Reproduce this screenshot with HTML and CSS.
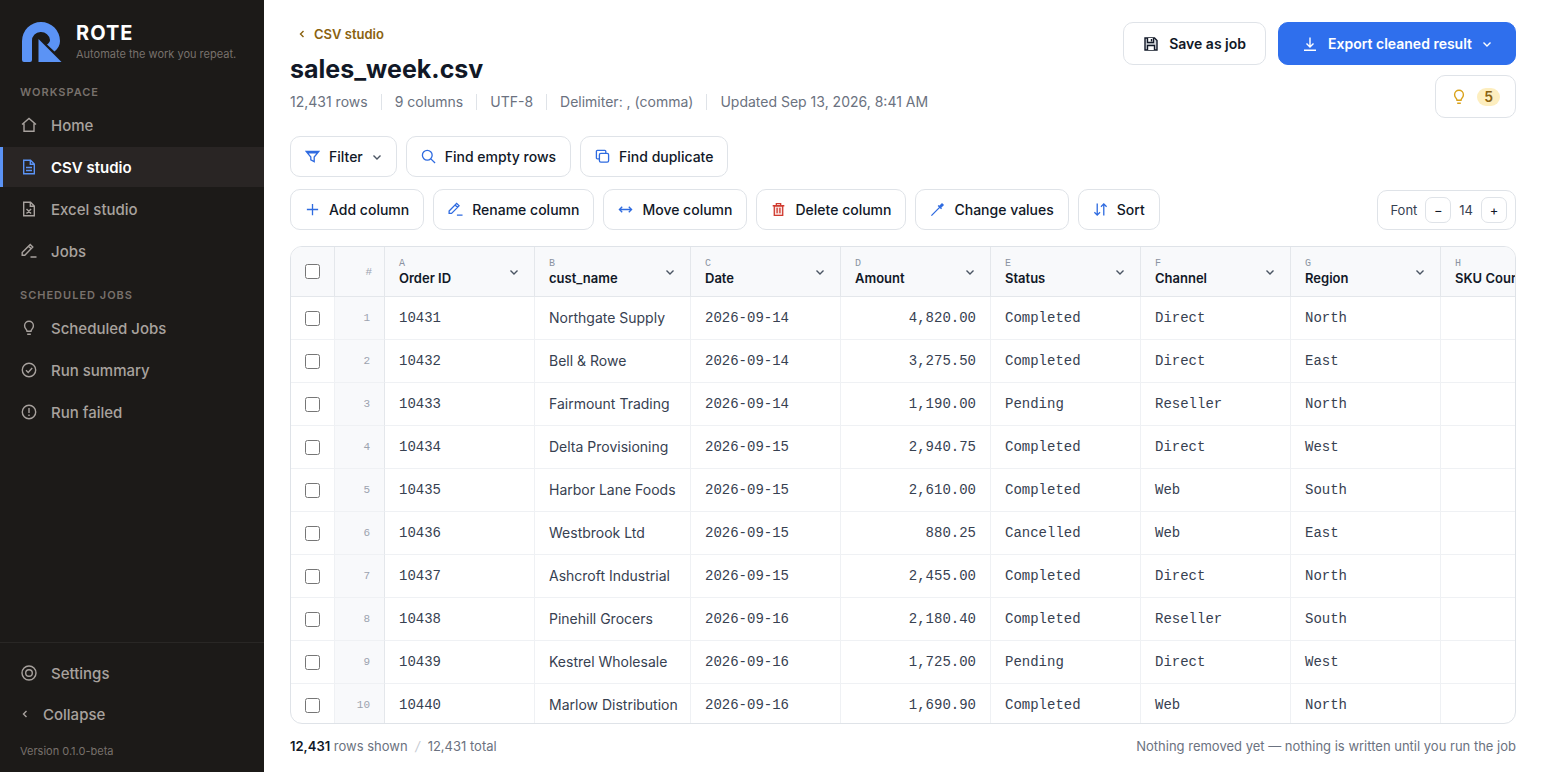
FILE: index.html
```html
<!DOCTYPE html>
<html lang="en">
<head>
    <meta charset="utf-8">
    <meta name="viewport" content="width=device-width">
    <title>ROTE</title>
    <link rel="stylesheet" href="styles.css">
</head>

<body>
    <svg class="sprite" aria-hidden="true">
        <symbol id="i-home" viewBox="0 0 16 16"><path d="M1 7.5 8 1.5l7 6M3 6.5V14.3h10V6.5"/></symbol>
        <symbol id="i-file" viewBox="0 0 16 16"><path d="M2.7 1.2h6.8l3.8 3.8v9.8H2.7zM9.3 1.5v3.7h3.7M5 8.5h6M5 11.5h6"/></symbol>
        <symbol id="i-excel" viewBox="0 0 16 16"><path d="M2.7 1.2h6.8l3.8 3.8v9.8H2.7zM9.3 1.5v3.7h3.7M5.5 8l4.6 4.6M10.1 8l-4.6 4.6"/></symbol>
        <symbol id="i-edit" viewBox="0 0 16 16"><path d="M1.2 9.600 9.200 1.500l2.600 2.600-8 8.100H1.200zM7.600 3.200l2.600 2.600M9.500 14h6"/></symbol>
        <symbol id="i-bulb" viewBox="0 0 16 16"><path d="M6 11.3c0-2-2.4-2.5-2.4-5.6a4.4 4.4 0 0 1 8.8 0c0 3.1-2.4 3.6-2.4 5.6zM6.2 14.2h3.6"/></symbol>
        <symbol id="i-check" viewBox="0 0 16 16"><circle cx="8" cy="8" r="6.7"/><path d="m5 8.2 2.2 2.200L11.200 6"/></symbol>
        <symbol id="i-alert" viewBox="0 0 16 16"><circle cx="8" cy="8" r="6.7"/><path d="M8 4v5M8 10.500v1.500"/></symbol>
        <symbol id="i-settings" viewBox="0 0 16 16"><circle cx="8" cy="8" r="7"/><circle cx="8" cy="8" r="3.3"/></symbol>
        <symbol id="i-left" viewBox="0 0 8 8"><path d="M5.5 1 2.5 4l3 3"/></symbol>
        <symbol id="i-down" viewBox="0 0 10 10"><path d="m1.5 3.500 3.500 3.500 3.500-3.500"/></symbol>
        <symbol id="i-save" viewBox="0 0 16 16"><path fill="#d5d8dd" d="M2 2h9.500L14 4.500V14H2z"/><path fill="#fff" d="M4.500 2v4.500h6V2M4.500 14V9.500h7V14"/><path d="M8.500 3v2.500"/></symbol>
        <symbol id="i-export" viewBox="0 0 16 16"><path d="M8 1.500v9M4.500 7.500 8 11l3.500-3.500M2 14.200h12"/></symbol>
        <symbol id="i-filter" viewBox="0 0 16 16"><path d="M1.200 2.500h13.600L9.800 8.500v5L6.200 11.500v-3zM2.500 4h11"/></symbol>
        <symbol id="i-search" viewBox="0 0 16 16"><circle cx="6.700" cy="6.700" r="5.200"/><path d="m10.500 10.500 4.500 4.500"/></symbol>
        <symbol id="i-copy" viewBox="0 0 16 16"><rect x="4.700" y="4.700" width="9.800" height="9.300" rx="1.500"/><path d="M4.500 10.500H2.500a1 1 0 0 1-1-1V2.500a1 1 0 0 1 1-1h8a1 1 0 0 1 1 1v2"/></symbol>
        <symbol id="i-plus" viewBox="0 0 16 16"><path d="M8 2v12M2 8h12"/></symbol>
        <symbol id="i-move" viewBox="0 0 16 16"><path d="M1.500 8h13M4.500 5l-3 3 3 3M11.500 5l3 3-3 3"/></symbol>
        <symbol id="i-trash" viewBox="0 0 16 16"><path fill="#fbe3e0" d="M3.500 4h9v10.200h-9z"/><path d="M1.800 4h12.400M5.700 4V1.800h4.600V4M6.500 6v6M9.500 6v6"/></symbol>
        <symbol id="i-wand" viewBox="0 0 16 16"><path d="M1.500 14.500 10.500 5.500M8.700 3.700l3.600 3.600"/><path fill="currentColor" d="m10.300 4.500 1.200 1.200L14 3.200 12.800 2z"/></symbol>
        <symbol id="i-sort" viewBox="0 0 16 16"><path d="M4.500 1.500v12.500M1.500 11l3 3 3-3M11.500 14.500V2M8.500 5l3-3 3 3"/></symbol>
    </svg>

    <div class="app">
        <aside class="sidebar">
            <div class="brand">
                <svg class="logo" viewBox="0 0 40 40" aria-hidden="true">
                    <path d="M0 38V19A19 19 0 0 1 38 19C38 23 36 27 32.500 29.500L25 22.500C27 21 28 19.500 28 18A9 8.500 0 0 0 10 19V38Q10 40 8 40H2Q0 40 0 38z"/>
                    <path d="M16.500 17 39.500 40H16.500z"/>
                </svg>
                <div>
                    <div class="brand-name">ROTE</div>
                    <div class="brand-tag">Automate the work you repeat.</div>
                </div>
            </div>

            <nav class="nav">
                <h2>WORKSPACE</h2>
                <a href="#"><svg class="icon"><use href="#i-home"/></svg>Home</a>
                <a href="#" class="active" aria-current="page"><svg class="icon"><use href="#i-file"/></svg>CSV studio</a>
                <a href="#"><svg class="icon"><use href="#i-excel"/></svg>Excel studio</a>
                <a href="#"><svg class="icon"><use href="#i-edit"/></svg>Jobs</a>
                <h2>SCHEDULED JOBS</h2>
                <a href="#"><svg class="icon"><use href="#i-bulb"/></svg>Scheduled Jobs</a>
                <a href="#"><svg class="icon"><use href="#i-check"/></svg>Run summary</a>
                <a href="#"><svg class="icon"><use href="#i-alert"/></svg>Run failed</a>
            </nav>

            <div class="nav nav-bottom">
                <a href="#"><svg class="icon"><use href="#i-settings"/></svg>Settings</a>
                <button type="button" class="collapse"><svg class="icon small"><use href="#i-left"/></svg>Collapse</button>
                <p class="version">Version 0.1.0-beta</p>
            </div>
        </aside>

        <main class="main">
            <header class="header">
                <div>
                    <a href="#" class="back"><svg class="icon small"><use href="#i-left"/></svg>CSV studio</a>
                    <h1>sales_week.csv</h1>
                    <ul class="meta">
                        <li>12,431 rows</li>
                        <li>9 columns</li>
                        <li>UTF-8</li>
                        <li>Delimiter: , (comma)</li>
                        <li>Updated Sep 13, 2026, 8:41 AM</li>
                    </ul>
                </div>
                <div class="actions">
                    <button type="button" class="btn btn-lg"><svg class="icon"><use href="#i-save"/></svg>Save as job</button>
                    <button type="button" class="btn btn-lg primary"><svg class="icon"><use href="#i-export"/></svg>Export cleaned result<svg class="icon caret"><use href="#i-down"/></svg></button>
                    <button type="button" class="btn btn-lg hints" aria-label="Suggestions"><svg class="icon"><use href="#i-bulb"/></svg><span class="badge">5</span></button>
                </div>
            </header>

            <div class="toolbar">
                <button type="button" class="btn"><svg class="icon"><use href="#i-filter"/></svg>Filter<svg class="icon caret"><use href="#i-down"/></svg></button>
                <button type="button" class="btn"><svg class="icon"><use href="#i-search"/></svg>Find empty rows</button>
                <button type="button" class="btn"><svg class="icon"><use href="#i-copy"/></svg>Find duplicate</button>
            </div>
            <div class="toolbar">
                <button type="button" class="btn"><svg class="icon"><use href="#i-plus"/></svg>Add column</button>
                <button type="button" class="btn"><svg class="icon"><use href="#i-edit"/></svg>Rename column</button>
                <button type="button" class="btn"><svg class="icon"><use href="#i-move"/></svg>Move column</button>
                <button type="button" class="btn danger"><svg class="icon"><use href="#i-trash"/></svg>Delete column</button>
                <button type="button" class="btn"><svg class="icon"><use href="#i-wand"/></svg>Change values</button>
                <button type="button" class="btn"><svg class="icon"><use href="#i-sort"/></svg>Sort</button>
                <div class="font-size" role="group" aria-label="Font size">
                    <span>Font</span>
                    <button type="button" aria-label="Smaller">−</button>
                    <output>14</output>
                    <button type="button" aria-label="Larger">+</button>
                </div>
            </div>

            <div class="grid">
                <table>
                    <colgroup>
                        <col class="c-check"><col class="c-num"><col><col class="c-name"><col><col><col><col><col><col>
                    </colgroup>
                    <thead>
                        <tr>
                            <th class="check"><input type="checkbox" aria-label="Select all rows"></th>
                            <th class="num">#</th>
                            <th><div class="head"><span><small>A</small>Order ID</span><svg class="icon caret"><use href="#i-down"/></svg></div></th>
                            <th><div class="head"><span><small>B</small>cust_name</span><svg class="icon caret"><use href="#i-down"/></svg></div></th>
                            <th><div class="head"><span><small>C</small>Date</span><svg class="icon caret"><use href="#i-down"/></svg></div></th>
                            <th><div class="head"><span><small>D</small>Amount</span><svg class="icon caret"><use href="#i-down"/></svg></div></th>
                            <th><div class="head"><span><small>E</small>Status</span><svg class="icon caret"><use href="#i-down"/></svg></div></th>
                            <th><div class="head"><span><small>F</small>Channel</span><svg class="icon caret"><use href="#i-down"/></svg></div></th>
                            <th><div class="head"><span><small>G</small>Region</span><svg class="icon caret"><use href="#i-down"/></svg></div></th>
                            <th><div class="head"><span><small>H</small>SKU Count</span></div></th>
                        </tr>
                    </thead>
                    <tbody>
                        <tr><td class="check"><input type="checkbox" aria-label="Row 1"></td><td class="num">1</td><td>10431</td><td class="name">Northgate Supply</td><td>2026-09-14</td><td class="amount">4,820.00</td><td>Completed</td><td>Direct</td><td>North</td><td></td></tr>
                        <tr><td class="check"><input type="checkbox" aria-label="Row 2"></td><td class="num">2</td><td>10432</td><td class="name">Bell &amp; Rowe</td><td>2026-09-14</td><td class="amount">3,275.50</td><td>Completed</td><td>Direct</td><td>East</td><td></td></tr>
                        <tr><td class="check"><input type="checkbox" aria-label="Row 3"></td><td class="num">3</td><td>10433</td><td class="name">Fairmount Trading</td><td>2026-09-14</td><td class="amount">1,190.00</td><td>Pending</td><td>Reseller</td><td>North</td><td></td></tr>
                        <tr><td class="check"><input type="checkbox" aria-label="Row 4"></td><td class="num">4</td><td>10434</td><td class="name">Delta Provisioning</td><td>2026-09-15</td><td class="amount">2,940.75</td><td>Completed</td><td>Direct</td><td>West</td><td></td></tr>
                        <tr><td class="check"><input type="checkbox" aria-label="Row 5"></td><td class="num">5</td><td>10435</td><td class="name">Harbor Lane Foods</td><td>2026-09-15</td><td class="amount">2,610.00</td><td>Completed</td><td>Web</td><td>South</td><td></td></tr>
                        <tr><td class="check"><input type="checkbox" aria-label="Row 6"></td><td class="num">6</td><td>10436</td><td class="name">Westbrook Ltd</td><td>2026-09-15</td><td class="amount">880.25</td><td>Cancelled</td><td>Web</td><td>East</td><td></td></tr>
                        <tr><td class="check"><input type="checkbox" aria-label="Row 7"></td><td class="num">7</td><td>10437</td><td class="name">Ashcroft Industrial</td><td>2026-09-15</td><td class="amount">2,455.00</td><td>Completed</td><td>Direct</td><td>North</td><td></td></tr>
                        <tr><td class="check"><input type="checkbox" aria-label="Row 8"></td><td class="num">8</td><td>10438</td><td class="name">Pinehill Grocers</td><td>2026-09-16</td><td class="amount">2,180.40</td><td>Completed</td><td>Reseller</td><td>South</td><td></td></tr>
                        <tr><td class="check"><input type="checkbox" aria-label="Row 9"></td><td class="num">9</td><td>10439</td><td class="name">Kestrel Wholesale</td><td>2026-09-16</td><td class="amount">1,725.00</td><td>Pending</td><td>Direct</td><td>West</td><td></td></tr>
                        <tr><td class="check"><input type="checkbox" aria-label="Row 10"></td><td class="num">10</td><td>10440</td><td class="name">Marlow Distribution</td><td>2026-09-16</td><td class="amount">1,690.90</td><td>Completed</td><td>Web</td><td>North</td><td></td></tr>
                    </tbody>
                </table>
            </div>

            <footer class="footer">
                <p><b>12,431</b> rows shown <i>/</i> 12,431 total</p>
                <p>Nothing removed yet — nothing is written until you run the job</p>
            </footer>
        </main>
    </div>
</body>
</html>
```
FILE: styles.css
```css
* {
    box-sizing: border-box;
}
body {
    margin: 0;
    font-family: Inter, "Liberation Sans", sans-serif;
    font-size: 14px;
    color: #111827;
    background-color: #fff;
}
h1, h2, p, ul {
    margin: 0;
    padding: 0;
}
a {
    color: inherit;
    text-decoration: none;
}
button {
    font: inherit;
    color: inherit;
    cursor: pointer;
}
.sprite {
    display: none;
}
.icon {
    width: 16px;
    height: 16px;
    flex: none;
    fill: none;
    stroke: currentColor;
    stroke-width: 1.4;
}
.icon.small {
    width: 8px;
    height: 8px;
}
.icon.caret {
    width: 10px;
    height: 10px;
    color: #4b5563;
}
.app {
    display: flex;
    height: 100vh;
}

/* sidebar */
.sidebar {
    display: flex;
    flex-direction: column;
    width: 264px;
    flex: none;
    color: #a8a29e;
    background-color: #1c1a18;
}
.brand {
    display: flex;
    gap: 14px;
    padding: 22px 22px 0;
}
.logo {
    width: 40px;
    height: 40px;
    fill: #5b93f5;
}
.brand-name {
    font-size: 20px;
    font-weight: 700;
    line-height: 22px;
    letter-spacing: 1px;
    color: #fff;
}
.brand-tag {
    font-size: 11px;
    line-height: 20px;
    white-space: nowrap;
    color: #78716c;
}
.nav {
    display: flex;
    flex-direction: column;
    gap: 2px;
}
.nav h2 {
    padding: 13px 20px 2px;
    font-size: 11px;
    font-weight: 600;
    line-height: 18px;
    letter-spacing: 1px;
    color: #78716c;
}
.nav h2:first-child {
    padding-top: 19px;
}
.nav a, .collapse {
    display: flex;
    align-items: center;
    gap: 14px;
    height: 40px;
    padding: 0 18px;
    border: 0;
    border-left: 3px solid transparent;
    font-size: 15px;
    font-weight: 500;
    background: none;
}
.nav a.active {
    border-left-color: #5b93f5;
    font-weight: 600;
    color: #fff;
    background-color: #292524;
}
.nav a.active .icon {
    color: #5b93f5;
}
.nav-bottom {
    gap: 1px;
    margin-top: auto;
    padding: 10px 0 12px;
    border-top: 1px solid #292725;
}
.version {
    padding: 7px 20px 0;
    font-size: 11px;
    line-height: 18px;
    color: #78716c;
}

/* page header */
.main {
    display: flex;
    flex-direction: column;
    flex: 1;
    min-width: 0;
    padding: 22px 26px 16px;
}
.header {
    display: flex;
    justify-content: space-between;
    margin-bottom: 18px;
}
.back {
    display: inline-flex;
    align-items: center;
    gap: 8px;
    padding: 0 8px;
    font-size: 13px;
    font-weight: 600;
    line-height: 24px;
    color: #8a6210;
}
h1 {
    font-size: 25px;
    font-weight: 700;
    line-height: 46px;
}
.meta {
    display: flex;
    list-style: none;
    line-height: 20px;
    color: #6b7280;
}
.meta li {
    display: flex;
    align-items: center;
}
.meta li + li::before {
    content: "";
    height: 16px;
    margin: 0 13px;
    border-left: 1px solid #dfe3e8;
}
.actions {
    display: flex;
    flex-wrap: wrap;
    justify-content: flex-end;
    gap: 10px 12px;
    width: 400px;
}
.btn {
    display: flex;
    align-items: center;
    gap: 9px;
    height: 41px;
    padding: 0 14px;
    border: 1px solid #dfe3e8;
    border-radius: 10px;
    font-weight: 500;
    white-space: nowrap;
    background-color: #fff;
}
.btn-lg {
    gap: 10px;
    height: 43px;
    padding: 0 19px;
    font-weight: 600;
}
.btn.primary {
    padding: 0 23px;
    border-color: #2f6fed;
    color: #fff;
    background-color: #2f6fed;
}
.btn.primary .caret {
    color: #fff;
}
.hints .icon {
    color: #d9a21b;
}
.hints {
    padding: 0 15px;
}
.badge {
    padding: 0 7px;
    border-radius: 9px;
    line-height: 18px;
    color: #8a6210;
    background-color: #fdeebf;
}

/* toolbars */
.toolbar {
    display: flex;
    gap: 9px;
    margin-bottom: 12px;
}
.toolbar .icon {
    width: 15px;
    height: 15px;
    color: #2f6be0;
}
.toolbar .caret {
    width: 10px;
    height: 10px;
    color: #4b5563;
}
.toolbar .danger .icon {
    color: #d03a2f;
}
.font-size {
    display: flex;
    align-items: center;
    align-self: flex-end;
    gap: 8px;
    height: 40px;
    margin-left: auto;
    padding: 0 8px 0 12px;
    border: 1px solid #dfe3e8;
    border-radius: 10px;
    font-size: 13px;
    color: #374151;
}
.font-size button {
    width: 26px;
    height: 26px;
    padding: 0;
    border: 1px solid #dfe3e8;
    border-radius: 7px;
    color: #111827;
    background-color: #fff;
}

/* data grid */
.grid {
    flex: 1;
    min-height: 0;
    margin-top: 4px;
    overflow: auto;
    scrollbar-width: none;
    border: 1px solid #dfe3e8;
    border-radius: 12px;
}
table {
    width: 1300px;
    table-layout: fixed;
    border-collapse: separate;
    border-spacing: 0;
}
col {
    width: 150px;
}
.c-check {
    width: 44px;
}
.c-num {
    width: 50px;
}
.c-name {
    width: 156px;
}
th, td {
    height: 43px;
    padding: 0 14px;
    border-right: 1px solid #eff1f4;
    border-bottom: 1px solid #eff1f4;
    line-height: 20px;
    text-align: left;
    white-space: nowrap;
}
th {
    height: 50px;
    padding-right: 15px;
    border-color: #e4e7eb;
    font-size: 13px;
    font-weight: 600;
    background-color: #f8f9fb;
}
td {
    font-family: "Liberation Mono", monospace;
    color: #374151;
}
td.name {
    font-family: Inter, "Liberation Sans", sans-serif;
}
td.amount {
    text-align: right;
}
.check {
    padding: 0;
    text-align: center;
}
.check input {
    display: block;
    width: 15px;
    height: 15px;
    margin: 0 auto;
}
.num {
    border-right-color: #e4e7eb;
    font-family: "Liberation Mono", monospace;
    font-size: 11px;
    font-weight: 400;
    text-align: right;
    color: #9ca3af;
    background-color: #f8f9fb;
}
th.num {
    padding-right: 12px;
}
.head {
    display: flex;
    align-items: center;
    justify-content: space-between;
    line-height: 16px;
}
.head small {
    display: block;
    font-family: "Liberation Mono", monospace;
    font-size: 10px;
    font-weight: 400;
    line-height: 12px;
    color: #8b93a1;
}

.footer {
    display: flex;
    justify-content: space-between;
    padding-top: 12px;
    font-size: 13px;
    line-height: 20px;
    color: #6b7280;
}
.footer b {
    font-weight: 600;
    color: #111827;
}
.footer i {
    margin: 0 4px;
    color: #c5cad2;
}
```
